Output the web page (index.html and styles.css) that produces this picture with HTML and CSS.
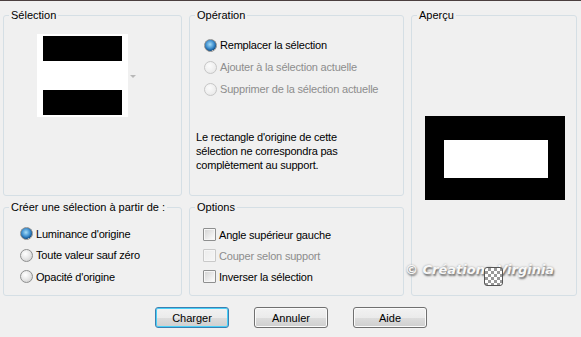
FILE: index.html
```html
<!DOCTYPE html>
<html lang="fr">
<head>
    <meta charset="UTF-8">
    <title>Charger une sélection</title>
    <link rel="stylesheet" href="styles.css">
</head>
<body>
    <div class="dialog">
        <fieldset class="group sel-group">
            <legend>Sélection</legend>
            <div class="sel-row">
                <div class="sel-thumb">
                    <div class="bar"></div>
                    <div class="bar"></div>
                </div>
                <span class="drop-arrow"></span>
            </div>
        </fieldset>

        <fieldset class="group op-group">
            <legend>Opération</legend>
            <div class="choices">
                <label class="choice"><input type="radio" name="op" checked> Remplacer la sélection</label>
                <label class="choice disabled"><input type="radio" name="op" disabled> Ajouter à la sélection actuelle</label>
                <label class="choice disabled"><input type="radio" name="op" disabled> Supprimer de la sélection actuelle</label>
            </div>
            <p class="note">Le rectangle d'origine de cette<br>sélection ne correspondra pas<br>complètement au support.</p>
        </fieldset>

        <fieldset class="group preview-group">
            <legend>Aperçu</legend>
            <div class="preview">
                <div class="preview-inner"></div>
            </div>
        </fieldset>

        <fieldset class="group src-group">
            <legend>Créer une sélection à partir de :</legend>
            <div class="choices">
                <label class="choice"><input type="radio" name="src" checked> Luminance d'origine</label>
                <label class="choice"><input type="radio" name="src"> Toute valeur sauf zéro</label>
                <label class="choice"><input type="radio" name="src"> Opacité d'origine</label>
            </div>
        </fieldset>

        <fieldset class="group opt-group">
            <legend>Options</legend>
            <div class="choices">
                <label class="choice"><input type="checkbox"> Angle supérieur gauche</label>
                <label class="choice disabled"><input type="checkbox" disabled> Couper selon support</label>
                <label class="choice"><input type="checkbox"> Inverser la sélection</label>
            </div>
        </fieldset>
    </div>

    <div class="buttons">
        <button class="btn default">Charger</button>
        <button class="btn">Annuler</button>
        <button class="btn">Aide</button>
    </div>

    <div class="watermark">© Créations Virginia</div>
    <div class="checker"></div>
</body>
</html>
```

FILE: styles.css
```css
body {
    margin: 0;
    width: 581px;
    height: 336px;
    background: #f0f0f0;
    border-top: 1px solid #4b3f3f;
    font-family: 'Liberation Sans', Arial, sans-serif;
    font-size: 11px;
    letter-spacing: -0.2px;
    color: #000;
    position: relative;
    overflow: hidden;
}

.dialog {
    display: grid;
    grid-template-columns: 179px 215px 166px;
    grid-template-rows: 188px 96px;
    column-gap: 7px;
    row-gap: 4px;
    padding: 7px 0 0 3px;
}

.group {
    margin: 0;
    padding: 0;
    border: 1px solid #d5dfe5;
    border-radius: 3px;
    min-width: 0;
}

.group legend {
    margin-left: 5px;
    padding: 0 2px;
    line-height: 14px;
    letter-spacing: 0;
}

.sel-group { grid-column: 1; grid-row: 1; }
.op-group { grid-column: 2; grid-row: 1; }
.preview-group { grid-column: 3; grid-row: 1 / span 2; }
.src-group { grid-column: 1; grid-row: 2; }
.opt-group { grid-column: 2; grid-row: 2; }

/* vignette de la sélection */
.sel-row {
    display: flex;
    align-items: center;
    gap: 2px;
    margin: 12px 0 0 33px;
}

.sel-thumb {
    width: 79px;
    height: 79px;
    padding: 2px 6px;
    background: #fff;
    display: flex;
    flex-direction: column;
    justify-content: space-between;
}

.sel-thumb .bar {
    height: 25px;
    background: #000;
}

.drop-arrow {
    width: 0;
    height: 0;
    border-left: 3px solid transparent;
    border-right: 3px solid transparent;
    border-top: 3px solid #b8b8b8;
    margin-top: 2px;
}

/* boutons radio / cases */
.choices {
    display: flex;
    flex-direction: column;
}

.choice {
    display: flex;
    align-items: center;
    gap: 2px;
    height: 22px;
}

.choice.disabled {
    color: #8d8d8d;
}

.op-group .choices {
    margin: 12px 0 0 14px;
}

.src-group .choices {
    margin: 9px 0 0 16px;
}

.src-group .choice {
    height: 21.5px;
}

.opt-group .choices {
    margin: 10px 0 0 13px;
}

.opt-group .choice {
    height: 21px;
}

input[type="radio"],
input[type="checkbox"] {
    appearance: none;
    -webkit-appearance: none;
    margin: 0 1px 0 0;
    width: 13px;
    height: 13px;
    border: 1px solid #8e8f8f;
    box-sizing: border-box;
    flex: none;
}

input[type="radio"] {
    border-radius: 50%;
    background: radial-gradient(circle at 40% 35%, #ffffff 0%, #e9e9e9 45%, #c9c9c9 100%);
}

input[type="radio"]:checked {
    background:
        radial-gradient(circle at 45% 40%, #a5dcf7 0%, #3f8fcf 45%, #17568f 70%, transparent 74%),
        radial-gradient(circle at 40% 35%, #ffffff 0%, #e9e9e9 45%, #c9c9c9 100%);
}

input[type="radio"]:disabled {
    border-color: #c6c6c6;
    background: radial-gradient(circle at 40% 35%, #fbfbfb 0%, #eeeeee 60%, #e0e0e0 100%);
}

input[type="checkbox"] {
    border-radius: 1px;
    background: linear-gradient(135deg, #d2d2d2 0%, #f4f4f4 75%, #ffffff 100%);
    box-shadow: inset 0 0 0 1px #f6f6f6;
    margin-right: 1px;
}

input[type="checkbox"]:disabled {
    border-color: #c9c9c9;
    background: linear-gradient(135deg, #ececec 0%, #f6f6f6 100%);
}

.note {
    margin: 30px 0 0 6px;
    line-height: 14px;
}

/* aperçu */
.preview {
    margin: 94px 0 0 13px;
    width: 140px;
    height: 84px;
    padding: 24px 17px 22px 19px;
    box-sizing: border-box;
    background: #000;
}

.preview-inner {
    width: 104px;
    height: 38px;
    background: #fff;
}

/* boutons du bas */
.buttons {
    display: flex;
    justify-content: center;
    gap: 25px;
    margin-top: 11px;
    padding-left: 1px;
}

.btn {
    width: 74px;
    height: 21px;
    padding: 0;
    font-family: inherit;
    font-size: 11px;
    color: #000;
    border: 1px solid #707070;
    border-radius: 3px;
    background: linear-gradient(#f2f2f2 0%, #ebebeb 50%, #dddddd 51%, #cfcfcf 100%);
    box-shadow: inset 0 0 0 1px #fbfbfb;
}

.btn.default {
    border-color: #3c7fb1;
    box-shadow: inset 0 0 0 1px #48d0f8;
}

/* filigrane */
.watermark {
    position: absolute;
    left: 405px;
    top: 261px;
    font-family: 'DejaVu Sans', sans-serif;
    font-weight: bold;
    font-style: italic;
    font-size: 13px;
    color: #f8f8f8;
    text-shadow: 1px 2px 2px #6e6e6e, 0 0 2px #9a9a9a;
    letter-spacing: 0;
}

.checker {
    position: absolute;
    left: 484px;
    top: 266px;
    width: 17px;
    height: 17px;
    border: 1px solid #555;
    border-radius: 3px;
    background-color: #fff;
    background-image:
        linear-gradient(45deg, #999 25%, transparent 25%, transparent 75%, #999 75%),
        linear-gradient(45deg, #999 25%, transparent 25%, transparent 75%, #999 75%);
    background-size: 6px 6px;
    background-position: 0 0, 3px 3px;
}
```
